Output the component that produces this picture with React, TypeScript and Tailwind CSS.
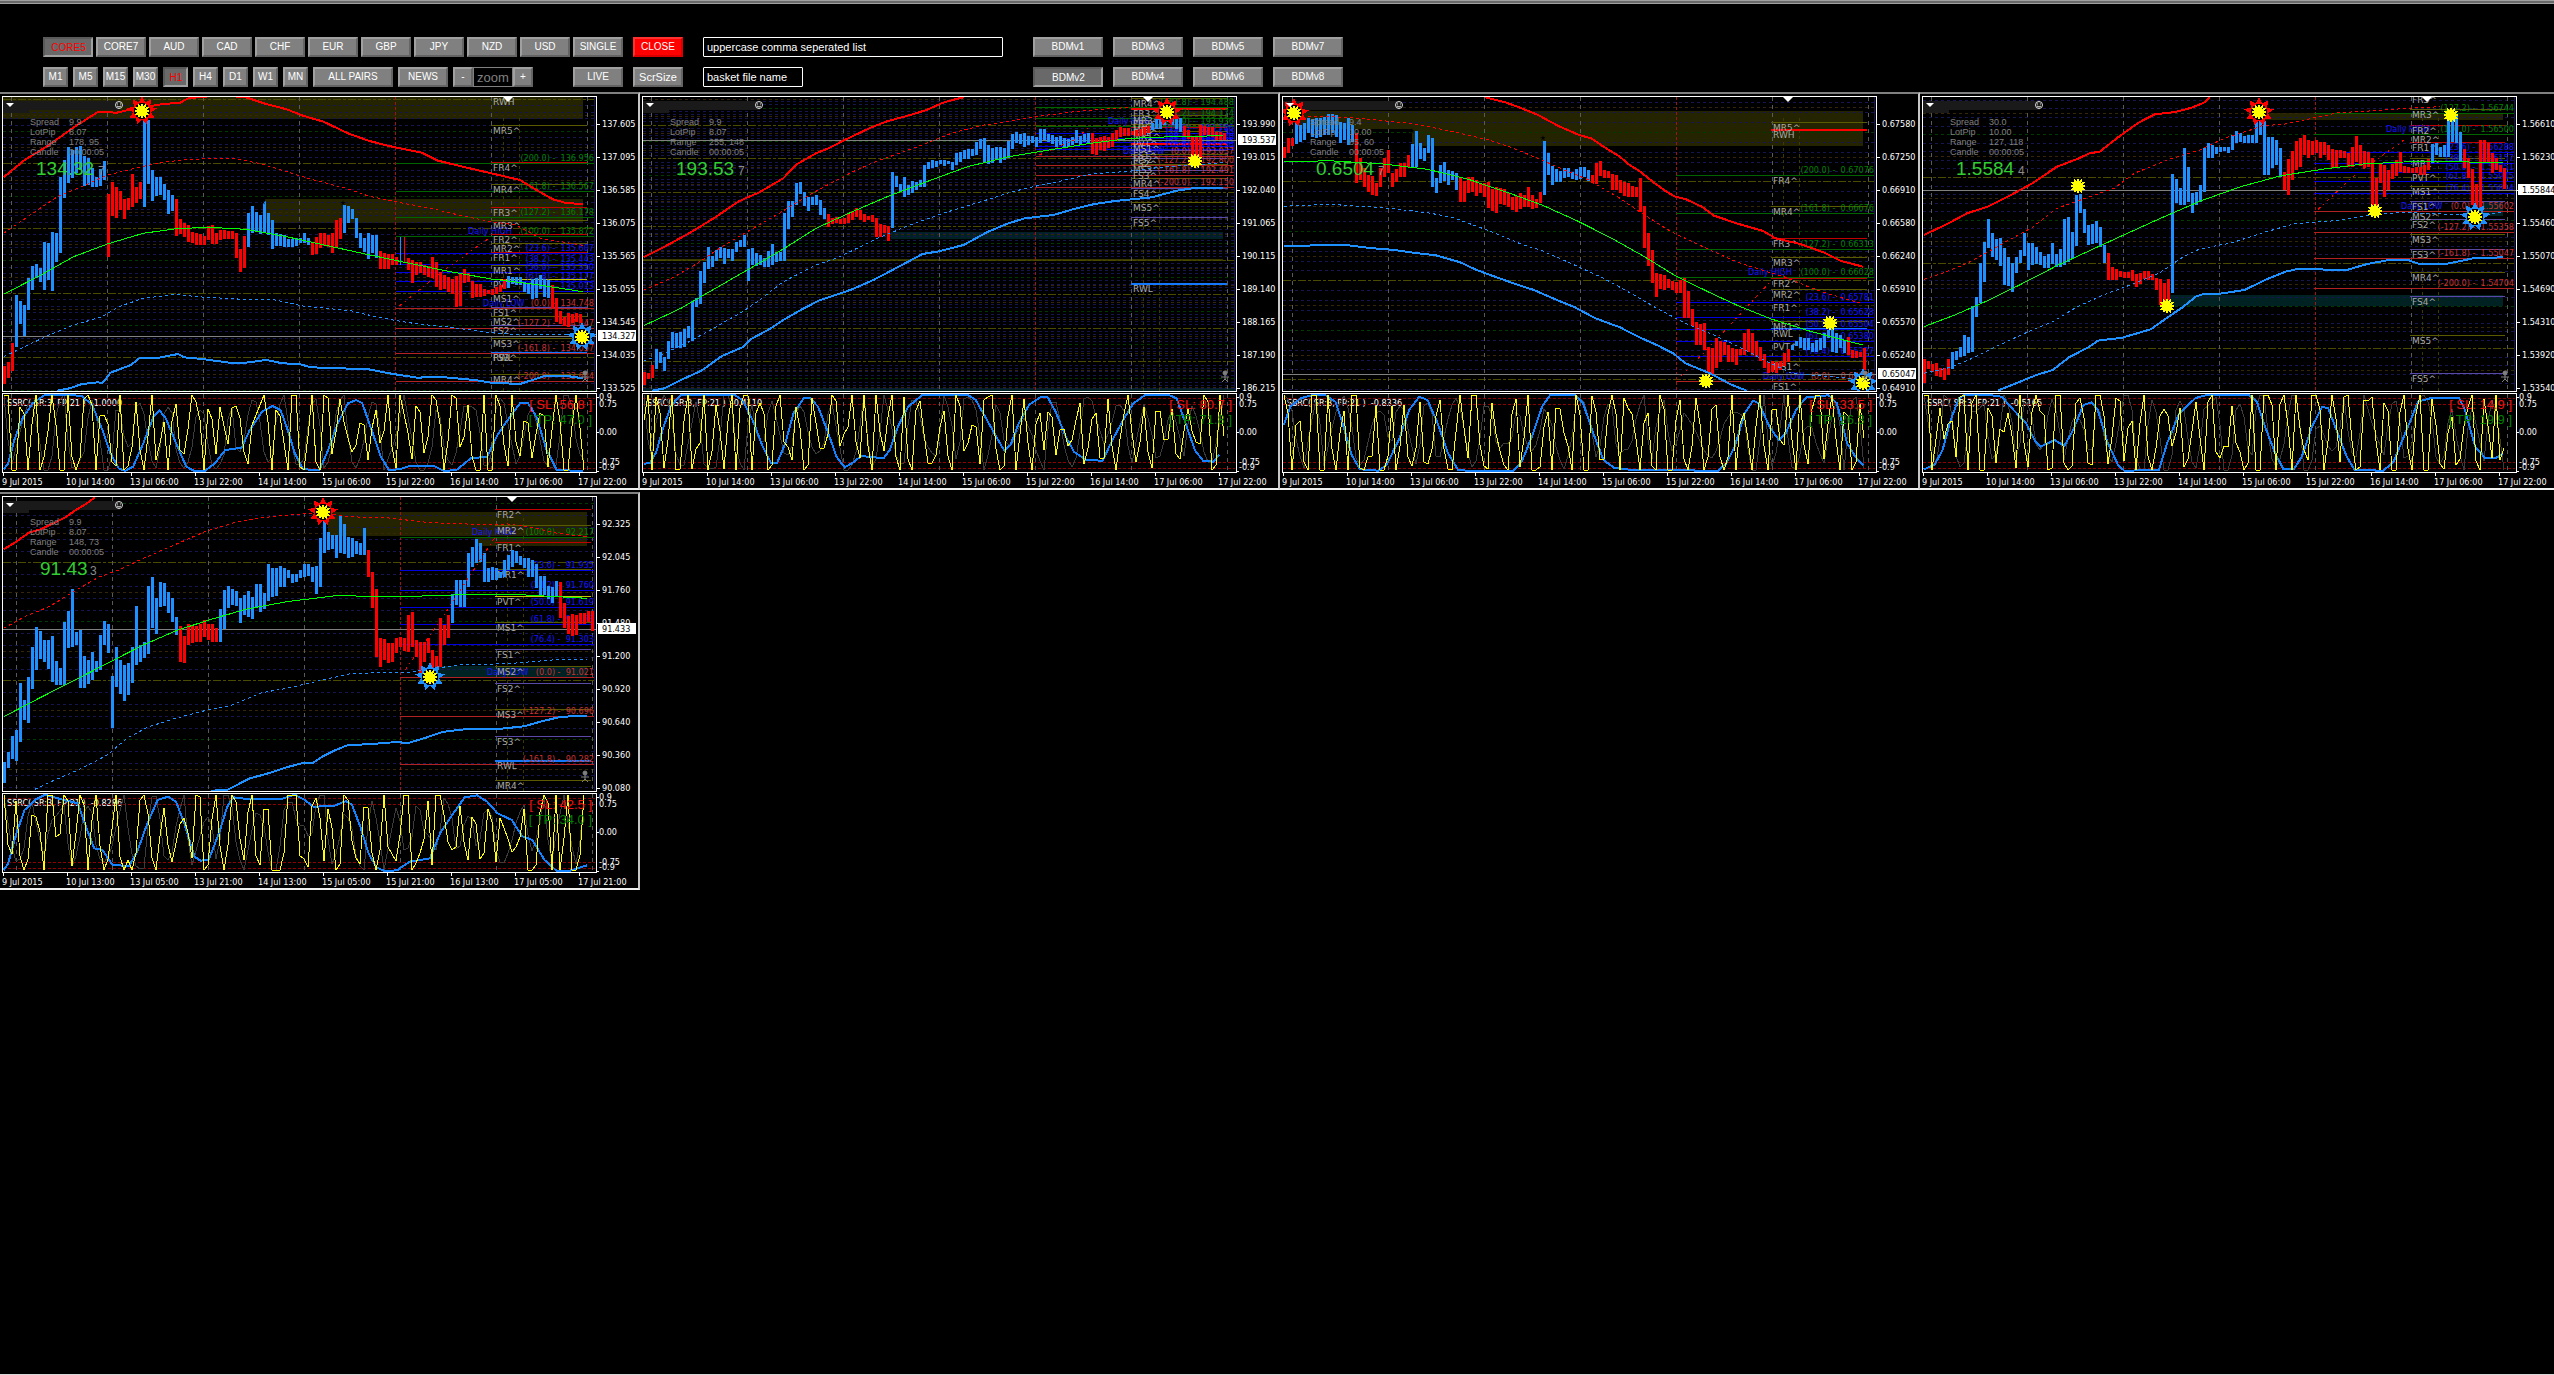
import React from "react";

type Pt = [number, number];
type Sun = { x: number; y: number; ring?: "red" | "blue" };
type Chart = {
  symbol: string;
  unit: number;
  shift: number;
  start: number;
  bars: string;
  prices: string[];
  current: string;
  currentY: number;
  big: string;
  small: string;
  smallX: number;
  bigX: number;
  lot: string;
  spread: string;
  range: string;
  dates: string[];
  grid: { base: number; period: number };
  vline: number;
  bands: [number, number, number, number, string][];
  levels: string;
  fibs: string;
  high?: number;
  low?: number;
  upper: string;
  upperDash: string;
  mid: string;
  lowerDash: string;
  lower: string;
  zig: string;
  wave: string;
  osc: string;
  sl: string;
  tp: string;
  suns: Sun[];
  stars: Pt[];
  seed: number;
};

const RED = "#ff0000";
const DODGER = "#1e90ff";
const LINE: Record<string, string> = {
  o: "#5a5a00",
  r: "#c00000",
  R: "#ff0000",
  s: "#5a4aa8",
  y: "#c8c800",
  B: "#1478ff",
  n: "none",
};
const FIB: Record<string, string> = { g: "#006400", b: "#0000e0", r: "#b22222" };
const FIB_TEXT: Record<string, string> = { g: "#008200", b: "#1414ff", r: "#c83232" };

const hoursA = ["9 Jul 2015", "10 Jul 14:00", "13 Jul 06:00", "13 Jul 22:00", "14 Jul 14:00", "15 Jul 06:00", "15 Jul 22:00", "16 Jul 14:00", "17 Jul 06:00", "17 Jul 22:00"];
const hoursB = ["9 Jul 2015", "10 Jul 13:00", "13 Jul 05:00", "13 Jul 21:00", "14 Jul 13:00", "15 Jul 05:00", "15 Jul 21:00", "16 Jul 13:00", "17 Jul 05:00", "17 Jul 21:00"];

const charts: Chart[] = [
  {
    symbol: "EURJPY", unit: 2.4424, shift: 0, start: 9, seed: 11,
    bars: "r828-881 817-863 760-843 b615-770 632-702 645-738 565-660 528-600 522-565 535-575 457-600 460-570 426-602 430-515 262-488 210-323 172-280 180-265 170-250 168-240 198-287 205-285 235-292 262-292 238-288 214-270 r312-500 275-378 290-385 303-360 328-386 323-360 252-350 290-340 275-328 b70-350 90-282 240-334 260-318 262-315 282-330 300-373 315-362 r328-438 388-432 400-440 405-455 425-458 428-464 432-465 437-464 408-450 406-463 430-462 420-450 420-447 423-447 423-448 430-505 478-545 438-535 b370-472 348-430 366-422 376-432 332-430 370-435 390-478 430-467 432-468 435-470 447-470 447-470 443-468 443-460 430-458 443-465 r455-495 442-492 430-475 428-468 434-472 430-488 390-473 384-446 b345-428 348-400 356-388 384-444 430-473 443-486 430-506 435-490 435-505 r483-537 490-538 492-538 492-525 500-525 t442-525 u442-515 r505-540 510-580 517-555 515-548 525-556 527-562 502-565 517-590 545-600 555-597 560-605 568-613 558-652 550-648 537-580 548-577 572-625 582-622 583-620 597-618 600-612 598-615 590-613 585-605 567-598 b558-595 562-583 560-585 560-585 575-605 582-613 568-628 565-625 555-598 567-622 570-625 r585-655 625-695 663-703 680-708 670-710 672-698 668-695 672-698",
    prices: ["137.605", "137.095", "136.585", "136.075", "135.565", "135.055", "134.545", "134.035", "133.525"],
    current: "134.327", currentY: 739, big: "134.32", small: "7", bigX: 88, smallX: 240, lot: "8.07", spread: "9.9", range: "178, 95",
    dates: hoursA, grid: { base: 220, period: 194 }, vline: 28,
    bands: [[8, 22, 1424, 87, "#242400"], [648, 327, 1424, 398, "#242400"]],
    levels: "RWH:19:n MR5^:106:o FR4^:217:r MR4^:282:o FR3^:352:r MR3^:391:o FR2^:433:r MR2^:460:o FR1^:487:r MR1^:526:o PVT^:568:y MS1^:610:o FS1^:652:s MS2^:679:o FS2^:704:s MS3^:745:o FS3^:785:s RWL:785:B MR4^:853:o",
    fibs: "g:220:(200.0):136.956 g:304:(161.8):136.567 g:380:(127.2):136.178 g:439:(100.0):135.872 b:490:(23.6):135.607 b:523:(38.2):135.443 b:547:(50.0):135.310 b:574:(61.8):135.177 b:604:(76.4):135.013 r:655:(0.0):134.748 r:715:(-127.2):134.447 r:790:(-161.8):134.057 r:874:(-200.0):133.624",
    high: 439, low: 655,
    upper: "9,262 60,210 120,165 180,112 240,65 285,68 330,55 400,42 440,38 460,25 500,20 540,16 600,22 650,42 700,58 740,77 790,95 850,130 900,152 950,168 1030,188 1070,212 1130,230 1200,250 1270,270 1310,300 1350,328 1380,338 1424,343",
    upperDash: "9,430 80,370 140,320 200,290 262,255 340,232 400,216 450,210 520,205 575,206 640,222 700,245 760,268 840,293 900,318 965,335 1060,357 1130,378 1200,395 1260,405 1320,445 1424,466",
    zig: "975,648 1090,535 1200,440",
    mid: "9,613 100,555 180,500 262,462 350,430 430,416 510,412 600,418 700,440 800,467 900,494 1000,520 1100,545 1200,567 1300,582 1424,605",
    lowerDash: "9,800 60,770 120,735 180,705 250,680 290,650 350,625 430,613 480,620 580,627 660,627 740,648 860,663 900,675 960,690 1020,702 1100,712 1200,728 1270,735 1424,732",
    lower: "140,902 170,895 200,882 240,877 250,880 270,848 320,825 340,805 380,805 435,792 450,802 500,808 560,818 600,818 650,810 690,820 730,822 760,832 900,838 960,852 1020,863 1070,860 1160,870 1200,878 1270,882 1330,858 1380,857 1424,865",
    wave: "9,1138 20,1120 35,1050 55,985 80,940 110,914 160,914 200,918 225,945 250,1020 270,1090 290,1135 305,1143 325,1130 350,1060 375,980 390,962 405,985 430,1060 455,1130 475,1143 500,1143 525,1120 550,1080 590,1073 610,1020 640,965 665,948 685,960 700,1010 720,1090 740,1138 780,1140 800,1085 825,1000 850,940 870,930 885,940 905,1010 930,1100 950,1140 975,1138 1000,1128 1060,1128 1085,1143 1115,1140 1150,1105 1190,1100 1215,1035 1240,990 1270,940 1290,940 1310,980 1335,1080 1360,1140 1424,1143",
    osc: "SSRC( SR:3, FP:21 )  -1.0000", sl: "[ SL: 56.8 ]", tp: "[ TP: 47.0 ]",
    suns: [{ x: 348, y: 63, ring: "red" }, { x: 1422, y: 740, ring: "blue" }],
    stars: [[643, 335], [838, 338]],
  },
  {
    symbol: "GBPJPY", unit: 2.4424, shift: 0, start: 9, seed: 29,
    bars: "r847-885 848-868 825-865 b778-838 785-820 800-842 752-808 725-775 728-775 727-775 716-772 708-745 632-752 625-652 542-643 515-578 470-537 498-532 480-512 470-505 475-523 478-505 478-513 455-487 450-472 435-472 478-572 475-525 488-528 495-525 505-532 483-532 462-525 486-515 485-512 368-512 333-418 333-380 280-345 275-312 305-347 322-362 322-345 315-345 330-375 353-388 r372-410 385-402 380-400 388-402 385-402 373-400 362-390 353-382 360-390 373-395 377-390 375-397 385-440 402-442 405-430 408-452 b247-415 258-290 282-303 262-320 285-315 273-310 275-300 270-290 225-290 215-237 210-233 213-230 210-222 210-228 213-222 215-240 190-225 185-215 180-208 178-208 178-198 157-195 148-178 145-220 165-222 175-220 170-208 170-218 175-210 153-205 133-178 127-160 132-163 130-170 137-165 137-160 140-172 118-160 117-150 132-155 135-162 140-172 137-165 143-172 147-172 140-165 120-160 138-165 133-155 130-160 r130-192 145-195 142-180 138-182 142-175 130-170 120-152 112-140 113-138 115-138 122-135 120-137 118-137 112-135 108-128 b98-120 88-118 88-118 60-105 65-95 70-105 82-118 85-125 r108-140 120-148 140-205 140-210 105-200 108-135 110-138 112-140 125-150 127-150 130-150",
    prices: ["193.990", "193.015", "192.040", "191.065", "190.115", "189.140", "188.165", "187.190", "186.215"],
    current: "193.537", currentY: 151, big: "193.53", small: "7", bigX: 88, smallX: 240, lot: "8.07", spread: "9.9", range: "255, 148",
    dates: hoursA, grid: { base: 205, period: 101.5 }, vline: 28,
    bands: [[1298, 62, 1424, 75, "#242400"], [614, 427, 1424, 448, "#002222"], [8, 893, 1455, 902, "#002222"], [8, 507, 1424, 513, "#3a3a00"]],
    levels: "MR4^:24:o FR3^:54:R MR3^:75:o FR2^:84:r MR2^:102:o FR1^:110:r MR1^:122:o PVT^:145:y MS1^:160:R FS1^:180:s MS2^:193:o FS2^:205:s MS3^:222:o FS3^:240:s MR4^:263:o FS4^:293:s MS5^:337:o FS5^:382:s RWL:578:B",
    fibs: "g:52:(161.8):194.488 g:85:(127.2):194.174 g:109:(100.0):193.936 b:130:(23.6):193.706 b:145:(38.2):193.570 b:157:(50.0):193.470 b:167:(61.8):193.365 b:178:(76.4):193.230 r:199:(0.0):193.037 r:226:(-127.2):192.800 r:256:(-161.8):192.491 r:292:(-200.0):192.150",
    high: 109, low: 199,
    upper: "9,502 60,470 120,430 180,385 240,335 260,323 290,308 350,265 380,225 430,190 460,175 500,150 560,115 600,95 660,75 700,60 740,38 770,28 790,22",
    upperDash: "9,600 80,563 140,520 200,470 262,425 340,370 400,325 450,290 520,245 575,215 640,187 700,160 760,130 840,105 900,95 965,80 1060,65 1130,58 1200,52",
    zig: "975,195 1060,150 1100,110",
    mid: "9,707 100,655 180,598 262,540 350,477 430,415 510,370 600,322 700,275 800,230 900,200 1000,180 1100,160 1200,145 1300,140 1424,137",
    lowerDash: "9,813 60,790 120,755 180,715 250,665 290,632 350,575 430,525 480,505 580,445 660,405 740,370 860,325 900,308 960,290 1020,275 1100,253 1200,243 1270,232 1424,218",
    lower: "30,902 60,895 100,870 150,842 200,798 250,772 270,748 320,715 350,690 400,655 440,630 490,610 520,597 570,570 620,538 690,492 730,484 790,465 850,425 900,400 940,385 1010,375 1060,357 1110,342 1160,333 1250,322 1310,302 1350,295 1424,294",
    wave: "9,1122 25,1118 40,1085 55,1020 75,950 100,914 150,914 230,914 250,930 275,990 300,1070 320,1118 335,1118 355,1060 375,970 400,924 415,924 435,950 460,1030 480,1100 500,1132 520,1118 540,1098 595,1105 610,1080 630,1010 655,950 690,914 800,914 820,930 845,985 870,1040 890,1082 905,1065 925,1000 950,945 980,920 995,920 1015,965 1040,1040 1060,1085 1090,1110 1130,1112 1150,1060 1180,990 1205,940 1235,914 1290,914 1310,925 1330,990 1355,1080 1375,1112 1400,1115 1415,1095",
    osc: "SSRC( SR:3, FP:21 )  -0.4110", sl: "[ SL: 80.7 ]", tp: "[ TP: 71.8 ]",
    suns: [{ x: 1286, y: 66, ring: "red" }, { x: 1355, y: 213 }],
    stars: [],
  },
  {
    symbol: "NZDUSD", unit: 2.4424, shift: 4, start: 19, seed: 47,
    bars: "r172-205 145-190 143-168 b95-162 105-155 98-150 85-130 88-140 85-145 85-140 80-135 73-135 72-130 75-140 95-160 100-150 85-165 105-155 r130-278 205-270 235-290 255-305 258-315 278-318 235-290 205-262 180-250 250-290 238-275 218-262 220-260 195-232 b163-230 123-230 160-208 175-212 135-190 145-292 265-308 225-280 215-272 240-285 243-270 250-300 r262-335 273-335 262-308 262-305 270-318 280-308 280-320 275-353 297-362 290-368 295-343 297-345 310-352 320-360 318-365 308-358 315-350 292-352 315-358 327-353 307-340 b152-315 190-255 228-285 238-275 243-275 235-265 235-262 245-268 238-270 230-268 230-262 240-272 r255-280 220-283 212-258 240-265 243-265 252-300 255-300 270-308 275-318 278-320 288-322 290-322 265-365 348-473 430-527 480-578 550-622 553-598 555-600 568-595 573-600 575-608 570-608 563-685 603-683 657-708 697-765 703-765 700-780 770-848 775-855 745-835 752-815 755-795 765-815 775-815 778-825 778-795 730-795 718-785 730-795 752-800 770-812 793-835 815-848 813-845 815-850 812-840 788-828 778-815 b765-780 752-768 742-775 745-780 745-780 758-785 750-785 745-780 730-775 720-745 715-785 730-790 735-775 750-790 r740-795 780-805 783-805 785-800 775-840",
    prices: ["0.67580", "0.67250", "0.66910", "0.66580", "0.66240", "0.65910", "0.65570", "0.65240", "0.64910"],
    current: "0.65047", currentY: 853, big: "0.6504", small: "7", bigX: 97, smallX: 250, lot: "10.00", spread: "9.4", range: "85, 60",
    dates: hoursA, grid: { base: 274, period: 297 }, vline: 38,
    bands: [[48, 64, 1434, 117, "#242400"], [331, 117, 1434, 167, "#242400"]],
    levels: "MR5^:97:o RWH:117:R FR4^:254:n MR4^:349:o FR3^:445:r MR3^:502:o FR2^:563:r MR2^:598:o FR1^:637:r MR1^:694:o RWL:714:B PVT^:754:y MS1^:814:o FS1^:873:s",
    fibs: "g:254:(200.0):0.67076 g:370:(161.8):0.66676 g:478:(127.2):0.66313 g:562:(100.0):0.66028 b:637:(23.6):0.65781 b:682:(38.2):0.65628 b:717:(50.0):0.65504 b:754:(61.8):0.65380 b:799:(76.4):0.65227 r:874:(0.0):0.64980",
    high: 562, low: 874,
    upper: "510,22 560,37 600,55 640,75 690,108 740,135 770,145 800,170 840,200 860,222 890,245 920,275 950,302 975,320 1000,327 1040,350 1070,377 1130,402 1190,423 1220,445 1280,462 1340,488 1380,513 1434,530",
    upperDash: "19,90 80,80 140,80 200,85 262,92 340,102 400,117 450,130 520,150 580,175 640,205 700,238 760,268 840,325 900,375 965,425 1060,480 1130,518 1200,545 1240,560 1300,590 1350,612 1434,642",
    zig: "990,858 1090,730 1210,572",
    mid: "19,216 130,212 262,222 370,238 470,268 560,305 650,345 740,395 820,445 900,500 975,557 1060,608 1130,648 1210,687 1300,722 1370,745 1434,765",
    lowerDash: "19,349 130,343 262,353 370,368 430,382 520,422 600,463 650,482 720,520 800,565 860,605 930,655 1000,700 1060,730 1130,770 1200,815 1260,850 1434,868",
    lower: "19,468 80,467 100,464 170,465 230,474 290,480 340,489 390,496 450,517 490,540 530,558 580,580 630,600 690,632 730,652 780,685 840,712 890,743 930,765 970,790 1000,820 1060,850 1110,883 1150,902",
    wave: "19,1005 35,950 60,925 90,915 120,915 145,935 165,1010 185,1095 205,1138 250,1142 270,1125 300,1050 325,960 350,920 370,930 395,1000 420,1090 445,1140 480,1143 580,1143 600,1115 625,1040 650,950 670,914 730,914 750,940 775,1030 800,1110 825,1133 870,1140 1080,1142 1100,1120 1120,1070 1145,970 1165,932 1180,940 1205,1010 1228,1050 1245,1030 1270,960 1295,922 1350,916 1370,940 1395,1060 1415,1100 1434,1125",
    osc: "SSRC( SR:3, FP:21 )  -0.8336", sl: "[ SL: 33.5 ]", tp: "[ TP: 26.3 ]",
    suns: [{ x: 45, y: 70, ring: "red" }, { x: 1051, y: 873 }, { x: 1354, y: 698 }, { x: 1433, y: 878, ring: "blue" }],
    stars: [[331, 123], [653, 145]],
  },
  {
    symbol: "GBPUSD", unit: 2.45, shift: 6, start: 24, seed: 83,
    bars: "r808-880 812-838 823-845 820-858 833-862 835-870 808-855 b785-838 782-810 770-800 735-798 740-790 648-785 622-680 520-640 455-575 388-475 428-500 447-510 445-528 475-585 502-588 520-605 500-550 480-520 428-497 460-540 460-525 472-522 485-525 498-535 493-535 460-522 492-530 477-530 388-525 380-515 427-503 315-467 312-368 358-430 405-465 402-462 393-458 412-470 465-520 r490-570 530-570 537-570 542-562 545-565 545-565 540-573 553-590 550-582 543-568 543-570 553-570 565-600 568-645 580-650 567-630 b252-608 268-340 295-345 175-345 232-335 310-370 305-345 285-335 175-305 158-205 165-205 170-192 170-185 170-183 170-188 135-180 123-160 128-155 138-160 135-160 135-160 90-158 88-135 92-255 140-255 140-235 150-225 175-260 r247-300 208-315 183-270 152-240 143-230 135-195 150-205 153-195 150-190 155-205 155-195 165-210 177-235 180-232 180-205 182-205 190-230 170-232 138-215 165-228 183-235 185-232 205-345 265-350 222-280 225-320 240-300 222-268 210-258 185-245 228-248 230-250 233-248 232-250 230-255 225-255 208-240 b162-220 160-195 170-200 165-200 85-200 80-155 78-160 125-215 r178-235 205-265 238-345 282-350 150-360 150-215 160-218 190-250 205-240 225-245 235-298",
    prices: ["1.56610", "1.56230", "1.55844", "1.55460", "1.55070", "1.54690", "1.54310", "1.53920", "1.53540"],
    current: "1.55844", currentY: 301, big: "1.5584", small: "4", bigX: 104, smallX: 256, lot: "10.00", spread: "30.0", range: "127, 118",
    dates: hoursA, grid: { base: 261, period: 257 }, vline: 42,
    bands: [[848, 70, 1443, 90, "#242400"], [619, 615, 1443, 648, "#002222"], [1375, 333, 1443, 378, "#002222"]],
    levels: "FR3^:12:n MR3^:58:o FR2^:104:r MR2^:131:o FR1^:157:r MR1^:203:o PVT^:245:y MS1^:289:o FS1^:334:s MS2^:362:o FS2^:388:s MS3^:432:o FS3^:478:s MR4^:547:o FS4^:619:s MS5^:736:o FS5^:850:s",
    fibs: "g:70:(127.2):1.56744 g:132:(100.0):1.56500 b:187:(23.6):1.56288 b:220:(38.2):1.56157 b:247:(50.0):1.56051 b:274:(61.8):1.55945 b:310:(76.4):1.55814 r:364:(0.0):1.55602 r:427:(-127.2):1.55358 r:505:(-161.8):1.55047 r:595:(-200.0):1.54704",
    high: 132, low: 364,
    upper: "24,435 80,403 130,370 180,350 230,320 290,280 350,230 400,207 430,190 455,185 500,142 550,98 590,73 640,66 680,53 710,38 725,22",
    upperDash: "24,568 80,545 130,520 180,487 230,452 290,412 350,355 420,325 490,295 540,250 620,210 700,180 760,145 830,118 850,108 910,102 975,85 1040,68 1130,62 1218,54 1290,50",
    zig: "990,358 1080,255 1218,135",
    mid: "24,710 100,675 180,632 262,583 350,527 430,482 510,437 600,387 700,334 800,290 900,257 1000,238 1100,222 1200,216 1300,214 1443,219",
    lowerDash: "24,850 80,835 130,812 200,770 280,725 340,695 400,650 470,612 530,585 600,550 660,500 700,477 780,458 850,430 930,402 1030,392 1120,375 1200,367 1330,374 1443,368",
    lower: "205,902 250,880 300,855 340,840 380,802 430,770 450,752 510,743 580,718 630,675 660,650 690,620 710,612 740,613 810,600 860,570 910,545 940,537 1060,540 1110,522 1160,511 1210,510 1240,523 1300,523 1370,505 1443,502",
    wave: "24,1138 50,1125 70,1080 90,990 110,925 125,914 180,914 215,920 240,955 275,1000 295,1050 310,1070 345,1050 368,1068 390,1020 415,945 435,937 450,960 475,1060 500,1125 515,1142 600,1140 620,1060 650,970 690,924 720,914 820,914 840,935 860,1010 885,1090 905,1138 930,1138 950,1100 975,1010 1000,950 1015,955 1035,1020 1060,1100 1080,1140 1150,1142 1175,1115 1200,1040 1235,935 1270,923 1335,924 1350,960 1375,1070 1400,1105 1425,1105 1443,1090",
    osc: "SSRC( SR:3, FP:21 )  -0.5165", sl: "[ SL: 14.9 ]", tp: "[ TP: 19.9 ]",
    suns: [{ x: 845, y: 65, ring: "red" }, { x: 403, y: 287 }, { x: 619, y: 647 }, { x: 1129, y: 363 }, { x: 1315, y: 74 }, { x: 1374, y: 380, ring: "blue" }],
    stars: [],
  },
  {
    symbol: "CADJPY", unit: 2.4424, shift: 0, start: 9, seed: 101,
    bars: "b817-880 785-835 737-808 720-812 580-757 630-690 560-700 470-597 410-540 422-507 450-515 450-537 438-575 513-585 533-585 395-585 362-475 297-470 425-465 420-595 498-595 510-582 487-570 513-545 435-540 393-465 402-490 558-715 472-590 510-612 525-632 520-615 470-580 347-525 465-515 455-505 288-493 262-415 325-433 275-350 278-348 305-370 323-395 380-435 r408-515 437-520 402-465 405-460 408-455 402-455 390-440 403-450 402-455 415-455 b358-455 300-418 288-355 297-345 303-347 325-398 315-375 303-380 320-388 283-355 283-365 308-358 222-332 235-320 235-318 228-290 235-290 240-263 253-280 252-275 240-263 222-260 222-257 230-275 228-312 143-290 88-188 125-180 135-178 135-205 78-190 103-192 140-205 145-200 152-192 160-195 113-195 r180-260 247-355 297-500 445-532 448-510 458-518 460-517 443-490 440-470 445-483 375-485 367-470 450-500 455-550 455-515 445-490 480-540 498-540 385-530 405-465 375-443 b312-398 270-345 270-350 270-350 190-290 172-232 147-218 158-215 190-275 235-275 230-270 235-270 245-265 210-260 195-240 180-232 183-220 198-225 203-235 205-262 210-262 223-295 258-318 258-315 288-328 290-340 272-318 r277-383 338-413 377-432 373-437 375-435 370-402 368-402 362-395 362-422",
    prices: ["92.325", "92.045", "91.760", "91.480", "91.200", "90.920", "90.640", "90.360", "90.080"],
    current: "91.433", currentY: 418, big: "91.43", small: "3", bigX: 97, smallX: 220, lot: "8.07", spread: "9.9", range: "148, 73",
    dates: hoursB, grid: { base: 217, period: 354 }, vline: 38,
    bands: [[800, 66, 1434, 137, "#242400"], [1160, 144, 1434, 167, "#242400"], [1070, 527, 1434, 562, "#002222"]],
    levels: "FR2^:58:r MR2^:106:o FR1^:157:r MR1^:238:o PVT^:319:y MS1^:397:o FS1^:478:s MS2^:529:o FS2^:580:s MS3^:658:o FS3^:739:s RWL:810:B MR4^:871:o",
    fibs: "g:142:(100.0):92.217 b:241:(23.6):91.935 b:301:(38.2):91.760 b:352:(50.0):91.619 b:403:(61.8):91.478 b:463:(76.4):91.303 r:562:(0.0):91.021 r:679:(-127.2):90.696 r:823:(-161.8):90.282",
    high: 142, low: 562,
    upper: "9,178 40,155 70,128 100,118 160,82 185,60 210,42 232,22",
    upperDash: "9,415 60,380 120,350 180,305 240,262 290,240 350,205 420,168 500,125 580,95 640,83 720,73 790,70 850,80 950,84 1050,98 1160,103 1240,102 1300,112 1360,130 1434,140",
    zig: "990,540 1090,365 1210,140",
    mid: "9,680 100,622 180,572 262,520 350,465 430,422 510,390 600,358 700,335 820,317 980,320 1130,314 1270,314 1360,320 1434,325",
    lowerDash: "85,898 130,872 200,835 262,795 310,745 360,712 420,688 500,662 560,648 640,608 700,595 770,575 860,550 1000,547 1080,532 1130,524 1240,521 1320,513 1370,508 1434,509",
    lower: "515,902 555,900 610,865 650,852 700,832 740,819 765,818 790,798 820,780 850,765 900,763 960,757 1000,758 1040,743 1080,726 1140,717 1210,718 1280,709 1320,695 1370,680 1434,678",
    wave: "9,1140 20,1120 40,1030 60,960 85,930 110,914 150,928 190,940 210,1010 230,1075 250,1080 275,1125 315,1128 335,1085 360,1000 385,930 410,920 430,935 450,1000 475,1100 490,1112 510,1108 535,1030 555,950 570,922 610,928 690,926 720,914 745,930 765,950 815,948 845,933 860,945 880,1010 900,1090 920,1133 940,1143 970,1141 1000,1115 1050,1105 1075,1030 1110,965 1135,922 1165,916 1190,935 1215,970 1250,990 1275,1038 1300,1050 1330,1110 1360,1143 1390,1143 1434,1126",
    osc: "SSRC( SR:3, FP:21 )  -0.8286", sl: "[ SL: 42.5 ]", tp: "[ TP: 34.0 ]",
    suns: [{ x: 789, y: 65, ring: "red" }, { x: 1051, y: 562, ring: "blue" }],
    stars: [],
  },
];

const range = (n: number) => Array.from({ length: n }, (_, i) => i);

function oscillator(seed: number, count: number): number[] {
  let s = seed * 7919;
  const rnd = () => {
    s = (s * 1103515245 + 12345) % 2147483648;
    return s / 2147483648;
  };
  let phase = 0;
  let amp = 1;
  return range(count).map(() => {
    phase += 0.4 + rnd() * 2.3;
    if (rnd() < 0.3) amp = 0.45 + rnd() * 0.9;
    const v = Math.sin(phase) * amp * 1.2 + (rnd() - 0.5) * 0.6;
    return Math.max(-0.98, Math.min(0.98, v));
  });
}

function starPoints(cx: number, cy: number, n: number, outer: number, inner: number) {
  return range(n * 2)
    .map((i) => {
      const a = (Math.PI * i) / n - Math.PI / 2;
      const r = i % 2 ? inner : outer;
      return `${(cx + r * Math.cos(a)).toFixed(1)},${(cy + r * Math.sin(a)).toFixed(1)}`;
    })
    .join(" ");
}

function SunMark({ x, y, ring }: { x: number; y: number; ring?: "red" | "blue" }) {
  return (
    <g shapeRendering="crispEdges">
      {ring && <polygon points={starPoints(x, y, 9, 15, 9)} fill={ring === "red" ? RED : DODGER} />}
      {ring && <circle cx={x} cy={y} r={8} fill="#000" />}
      <polygon points={starPoints(x, y, 12, 8, 5)} fill="#ffff00" />
    </g>
  );
}

const small = "font-['DejaVu_Sans_Condensed','DejaVu_Sans',sans-serif] text-[9px]";
const arial = "font-['Liberation_Sans',Arial,sans-serif]";

function ChartPlot({ c }: { c: Chart }) {
  const X = (v: number) => Math.round(v / c.unit - c.shift);
  const Y = (v: number) => Math.round(v / 3);
  const path = (s: string) =>
    s.split(" ").map((p) => { const [a, b] = p.split(",").map(Number); return `${(a / c.unit - c.shift).toFixed(1)},${(b / 3).toFixed(1)}`; }).join(" ");
  const lx = c.vline;
  const redX = X(lx + 938);
  const lvlX = X(lx + 1172);
  const lvlEnd = X(lx + 1406);
  const right = 594;

  let color = RED;
  let thin = false;
  const bars = c.bars.split(" ").map((t, i) => {
    const k = t[0];
    if (k === "r" || k === "b") { color = k === "r" ? RED : DODGER; thin = false; }
    if (k === "t" || k === "u") { color = k === "t" ? DODGER : RED; thin = true; }
    const [hi, lo] = t.replace(/^[a-z]/, "").split("-").map(Number);
    return { x: X(c.start) + i * 4, y: Y(hi), h: Y(lo) - Y(hi), color, w: thin ? 1 : 3 };
  });

  const step = c.grid.period / 10;
  const first = Math.ceil((24 - c.grid.base) / step);
  const last = Math.floor((900 - c.grid.base) / step);
  const grid = range(last - first + 1).map((k) => {
    const n = first + k;
    const m = ((n % 10) + 10) % 10;
    return { y: Y(c.grid.base + n * step), stroke: m === 0 ? "#4a4a00" : m === 5 ? "#003a00" : "#15154f", dash: m === 0 ? "8 2 3 2" : "3 3" };
  });
  const quarters = range(60)
    .map((k) => c.grid.base + (k - 30) * (c.grid.period / 4))
    .filter((v, i) => i % 2 === 1 && v > 26 && v < 898);

  const values = oscillator(c.seed, 146);
  const osc = (list: number[]) => list.map((v, i) => `${X(c.start) + i * 4},${Math.round(342.5 - v * 38)}`).join(" ");
  const slow = oscillator(c.seed + 5, 100);
  const lagged = range(146).map((i) => {
    const p = i * 0.6;
    const k = Math.floor(p);
    return slow[k] + (slow[k + 1] - slow[k]) * (p - k);
  });
  const labels = [["0.9", 310], ["0.75", 317], ["0.00", 345], ["-0.75", 375], ["-0.9", 380]] as [string, number][];

  return (
    <svg viewBox="0 4 638 394" className="block h-auto w-full" role="img" aria-label={`${c.symbol} chart`}>
      <defs>
        <clipPath id={`main-${c.symbol}`}><rect x="3" y="7" width="593" height="294" /></clipPath>
        <clipPath id={`sub-${c.symbol}`}><rect x="3" y="304" width="593" height="78" /></clipPath>
      </defs>
      <g clipPath={`url(#main-${c.symbol})`} shapeRendering="crispEdges">
        {c.bands.map(([a, b, e, f, col], i) => (
          <rect key={i} x={X(a)} y={Y(b)} width={X(e) - X(a)} height={Y(f) - Y(b)} fill={col} />
        ))}
        {grid.map((g, i) => (
          <line key={i} x1={3} x2={595} y1={g.y + 0.5} y2={g.y + 0.5} stroke={g.stroke} strokeDasharray={g.dash} />
        ))}
        {quarters.map((v, i) => (
          <line key={i} x1={3} x2={595} y1={Y(v) + 0.5} y2={Y(v) + 0.5} stroke="#35250a" strokeDasharray="3 3" />
        ))}
        {range(7).map((i) => (
          <line key={i} x1={X(lx) + i * 96 + 0.5} x2={X(lx) + i * 96 + 0.5} y1={7} y2={301} stroke={i === 4 ? "#a01414" : "#5a5a5a"} strokeDasharray={i === 4 ? "3 2" : "4 4"} />
        ))}
        {[12, 28].map((d) => (
          <line key={d} x1={lvlX + d + 0.5} x2={lvlX + d + 0.5} y1={28} y2={301} stroke="#3c3c00" strokeDasharray="3 3" />
        ))}
        <line x1={right + 0.5} x2={right + 0.5} y1={7} y2={301} stroke="#15154f" />
      </g>
      <g clipPath={`url(#main-${c.symbol})`}>
        <g shapeRendering="crispEdges">
          {c.levels.split(" ").map((t, i) => {
            const [, y, k] = t.split(":");
            return <line key={i} x1={lvlX} x2={lvlEnd} y1={Y(+y) + 0.5} y2={Y(+y) + 0.5} stroke={LINE[k]} strokeWidth={k === "R" || k === "B" ? 2 : 1} />;
          })}
          {c.fibs.split(" ").map((t, i) => {
            const [k, y] = t.split(":");
            return <line key={i} x1={redX} x2={right} y1={Y(+y) + 0.5} y2={Y(+y) + 0.5} stroke={FIB[k]} />;
          })}
        </g>
        {c.fibs.split(" ").map((t, i) => {
          const [k, y, a, b] = t.split(":");
          return <text key={i} x={right} y={Y(+y) - 2} textAnchor="end" fill={FIB_TEXT[k]} className={small} xmlSpace="preserve">{`${a} -  ${b}`}</text>;
        })}
        {c.high && <text x={X(lx + 1114)} y={Y(c.high) - 2} fill="#1414ff" className={small}>Daily HIGH</text>}
        {c.low && <text x={X(lx + 1151)} y={Y(c.low) - 2} fill="#1414ff" className={small}>Daily LOW</text>}
        {c.levels.split(" ").map((t, i) => {
          const [name, y] = t.split(":");
          return <text key={i} x={lvlX + 2} y={Y(+y) + 9} fill="#a9a9a9" className="font-['DejaVu_Sans',sans-serif] text-[9px]">{name}</text>;
        })}
        <rect x={3} y={11} width={117} height={9} fill="#1a1a1a" />
        <rect x={3} y={17} width={26} height={6} fill="#1a1a1a" />
        <line x1={3} x2={596} y1={Y(c.currentY) + 0.5} y2={Y(c.currentY) + 0.5} stroke="#808080" shapeRendering="crispEdges" />
        <g shapeRendering="crispEdges">
          {bars.map((b, i) => (
            <rect key={i} x={b.x - (b.w === 3 ? 1 : 0)} y={b.y} width={b.w} height={b.h} fill={b.color} />
          ))}
        </g>
        <g fill="none" shapeRendering="crispEdges">
          <polyline points={path(c.upperDash)} stroke={RED} strokeDasharray="3 3" />
          <polyline points={path(c.zig)} stroke={RED} strokeDasharray="3 4 1 4" />
          <polyline points={path(c.lowerDash)} stroke={DODGER} strokeDasharray="3 3" />
          <polyline points={path(c.mid)} stroke="#00ff00" />
          <polyline points={path(c.upper)} stroke={RED} strokeWidth={2} />
          <polyline points={path(c.lower)} stroke={DODGER} strokeWidth={2} />
        </g>
        {c.stars.map(([a, b], i) => <polygon key={i} points={starPoints(X(a), Y(b), 5, 3, 1)} fill="#000" />)}
        {c.suns.map((s, i) => <SunMark key={i} x={X(s.x)} y={Y(s.y)} ring={s.ring} />)}
      </g>

      <polygon points="6,13 14,13 10,17" fill="#fff" />
      <polygon points={`${lvlX + 12},7 ${lvlX + 22},7 ${lvlX + 17},12`} fill="#fff" />
      <g transform="translate(119 15)" fill="none" stroke="#ddd">
        <circle r={3.5} />
        <path d="M-1.5 -1.5v1M1.5 -1.5v1M-2 1q2 2 4 0" />
      </g>
      <g transform="translate(585 286)" stroke="#808080" fill="#808080">
        <circle cy={-3} r={2} />
        <path d="M-4 1H4M0 -1V3M-3 6L0 3L3 6" fill="none" />
      </g>

      <g fill="#808080" className={`${arial} text-[9px]`}>
        {[["Spread", c.spread], ["LotPip", c.lot], ["Range", c.range], ["Candle", "00:00:05"]].map(([a, b], i) => (
          <React.Fragment key={a}>
            <text x={30} y={35 + i * 10}>{a}</text>
            <text x={69} y={35 + i * 10}>{b}</text>
          </React.Fragment>
        ))}
      </g>
      <text x={X(c.bigX)} y={85} fill="#32cd32" className={`${arial} text-[19px]`}>{c.big}</text>
      <text x={X(c.smallX)} y={85} fill="#8a8a8a" className={`${arial} text-[12px]`}>{c.small}</text>

      <text x={7} y={316} fill="#fff" className={small} xmlSpace="preserve">{c.osc}</text>
      <g clipPath={`url(#sub-${c.symbol})`} shapeRendering="crispEdges" fill="none">
        {[308, 314, 372, 378].map((y) => (
          <line key={y} x1={3} x2={595} y1={y + 0.5} y2={y + 0.5} stroke="#900000" strokeDasharray="3 2" />
        ))}
        {range(7).map((i) => (
          <line key={i} x1={X(lx) + i * 96 + 0.5} x2={X(lx) + i * 96 + 0.5} y1={304} y2={382} stroke="#5a5a5a" strokeDasharray="4 4" />
        ))}
        <polyline points={osc(lagged)} stroke="#3c3c3c" />
        <polyline points={path(c.wave)} stroke="#1482ff" strokeWidth={2} />
        <polyline points={osc(values)} stroke="#ffff00" />
      </g>
      <text x={592} y={319} textAnchor="end" fill="#f01414" className={`${arial} text-[13px]`}>{c.sl}</text>
      <text x={592} y={334} textAnchor="end" fill="#008200" className={`${arial} text-[13px]`}>{c.tp}</text>

      <g fill="none" stroke="#fff" shapeRendering="crispEdges">
        <rect x={2.5} y={6.5} width={594} height={295} />
        <rect x={2.5} y={303.5} width={594} height={79} />
        {c.prices.map((_, i) => <line key={i} x1={597} x2={600} y1={34.5 + i * 33} y2={34.5 + i * 33} />)}
        {[307, 342, 381].map((y) => <line key={y} x1={597} x2={599} y1={y + 0.5} y2={y + 0.5} />)}
        {c.dates.map((_, i) => <line key={i} x1={3.5 + i * 64} x2={3.5 + i * 64} y1={382} y2={386} />)}
      </g>
      <g fill="#fff" className={small}>
        {c.prices.map((p, i) => <text key={p} x={602} y={37 + i * 33}>{p}</text>)}
        {labels.map(([t, y]) => <text key={t} x={599} y={y}>{t}</text>)}
        {c.dates.map((d, i) => <text key={d} x={2 + i * 64} y={395}>{d}</text>)}
      </g>
      <rect x={598} y={Y(c.currentY) - 6} width={38} height={11} fill="#fff" />
      <text x={602} y={Y(c.currentY) + 3} fill="#000" className={small}>{c.current}</text>
    </svg>
  );
}

function ToolButton({ label, width, state }: { label: string; width: string; state?: "active" | "pressed" | "close" }) {
  const look =
    state === "close"
      ? "border-t-[#ff3030] border-l-[#ff3030] border-b-[#d80000] border-r-[#d80000] bg-[#ff0000] text-white"
      : state === "active"
        ? "border-t-[#5a5a5a] border-l-[#5a5a5a] border-b-[#a0a0a0] border-r-[#a0a0a0] bg-[#696969] text-[#ff0000] pt-px pl-px"
        : state === "pressed"
          ? "border-t-[#5a5a5a] border-l-[#5a5a5a] border-b-[#a0a0a0] border-r-[#a0a0a0] bg-[#696969] text-white pt-px pl-px"
          : "border-t-[#a0a0a0] border-l-[#a0a0a0] border-b-[#646464] border-r-[#646464] bg-[#808080] text-white";
  const size = label === "ScrSize" ? "text-[11px]" : "text-[10px]";
  return (
    <button type="button" className={`flex h-5 items-center justify-center whitespace-nowrap border-2 leading-none ${size} ${width} ${look}`}>
      {label}
    </button>
  );
}

const baskets = ["CORE5", "CORE7", "AUD", "CAD", "CHF", "EUR", "GBP", "JPY", "NZD", "USD", "SINGLE"];
const frames = ["M1", "M5", "M15", "M30", "H1", "H4", "D1", "W1", "MN"];
const versions = [["BDMv1", "BDMv3", "BDMv5", "BDMv7"], ["BDMv2", "BDMv4", "BDMv6", "BDMv8"]];

export default function App() {
  return (
    <div className="min-h-screen w-full overflow-hidden border-b border-[#d8d8d8] bg-black font-['Liberation_Sans',Arial,sans-serif]">
      <div className="h-1 border-y border-[#a0a0a0] bg-[#696969]" />
      <header className="flex h-[86px] items-start px-[43px] pt-[33px]">
        <div className="flex flex-col gap-2.5">
          <div className="flex gap-[3px]">
            {baskets.map((b) => <ToolButton key={b} label={b} width="w-[50px]" state={b === "CORE5" ? "active" : undefined} />)}
            <div className="ml-[7px]"><ToolButton label="CLOSE" width="w-[50px]" state="close" /></div>
          </div>
          <div className="flex gap-[5px]">
            {frames.map((f) => <ToolButton key={f} label={f} width="w-[25px]" state={f === "H1" ? "active" : undefined} />)}
            <ToolButton label="ALL PAIRS" width="w-20" />
            <ToolButton label="NEWS" width="w-[50px]" />
            <div className="flex">
              <ToolButton label="-" width="w-5" />
              <span className="flex h-5 w-10 items-center justify-center border border-[#808080] text-[13px] leading-none text-[#808080]">zoom</span>
              <ToolButton label="+" width="w-5" />
            </div>
            <div className="ml-auto flex gap-2.5">
              <ToolButton label="LIVE" width="w-[50px]" />
              <ToolButton label="ScrSize" width="w-[50px]" />
            </div>
          </div>
        </div>
        <div className="ml-5 flex w-[300px] flex-col gap-2.5">
          <input aria-label="Symbol list" defaultValue="uppercase comma seperated list" className="h-5 w-full rounded-[1px] border border-white bg-black px-[3px] text-[11px] text-white" />
          <input aria-label="Basket file" defaultValue="basket file name" className="h-5 w-[100px] rounded-[1px] border border-white bg-black px-[3px] text-[11px] text-white" />
        </div>
        <div className="ml-[30px] flex flex-col gap-2.5">
          {versions.map((row) => (
            <div key={row[0]} className="flex gap-2.5">
              {row.map((v) => <ToolButton key={v} label={v} width="w-[70px]" state={v === "BDMv2" ? "pressed" : undefined} />)}
            </div>
          ))}
        </div>
      </header>
      <main className="grid w-[calc(100%+6px)] grid-cols-4">
        {charts.map((c) => (
          <section key={c.symbol} className="mt-[2px] border-b-2 border-r-2 border-t-2 border-b-[#f0f0f0] border-r-[#c8c8c8] border-t-[#808080]">
            <ChartPlot c={c} />
          </section>
        ))}
      </main>
    </div>
  );
}
